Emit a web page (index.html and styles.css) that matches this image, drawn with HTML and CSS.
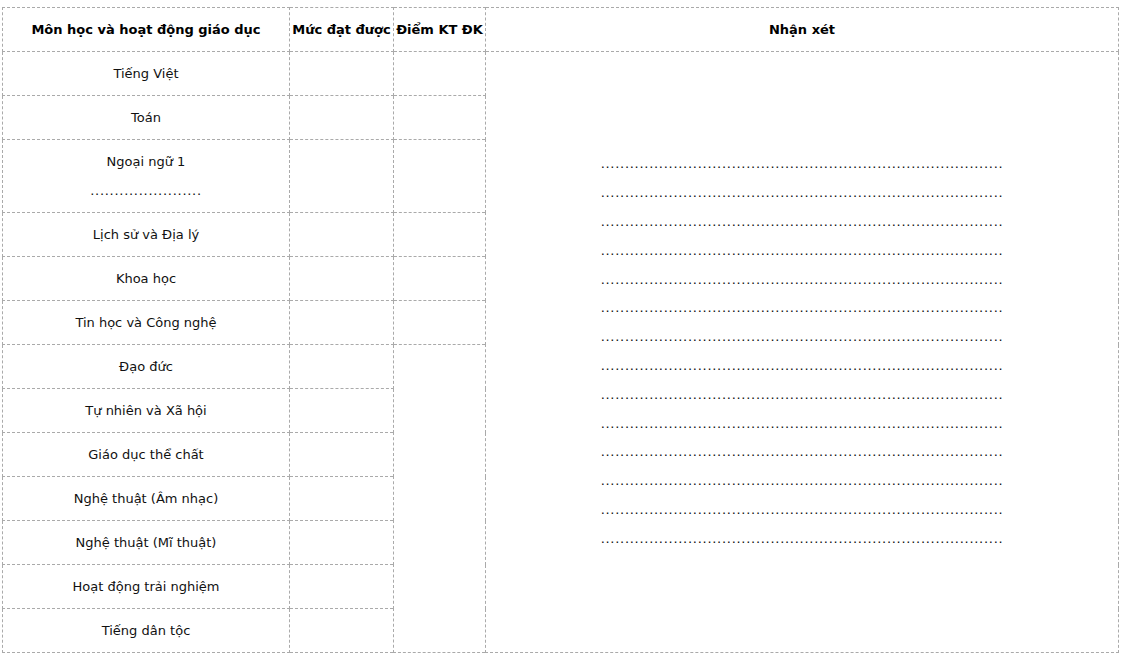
FILE: index.html
```html
<!DOCTYPE html>
<html lang="vi">
<head>
<meta charset="utf-8">
<title>Bảng nhận xét</title>
<link rel="stylesheet" href="styles.css">
</head>
<body>
<table class="report">
  <colgroup>
    <col class="c1">
    <col class="c2">
    <col class="c3">
    <col class="c4">
  </colgroup>
  <thead>
    <tr>
      <th>Môn học và hoạt động giáo dục</th>
      <th>Mức đạt được</th>
      <th>Điểm KT ĐK</th>
      <th>Nhận xét</th>
    </tr>
  </thead>
  <tbody>
    <tr>
      <td>Tiếng Việt</td>
      <td></td>
      <td></td>
      <td rowspan="13" class="comment">
        <p class="dots">...................................................................................</p>
        <p class="dots">...................................................................................</p>
        <p class="dots">...................................................................................</p>
        <p class="dots">...................................................................................</p>
        <p class="dots">...................................................................................</p>
        <p class="dots">...................................................................................</p>
        <p class="dots">...................................................................................</p>
        <p class="dots">...................................................................................</p>
        <p class="dots">...................................................................................</p>
        <p class="dots">...................................................................................</p>
        <p class="dots">...................................................................................</p>
        <p class="dots">...................................................................................</p>
        <p class="dots">...................................................................................</p>
        <p class="dots">...................................................................................</p>
      </td>
    </tr>
    <tr><td>Toán</td><td></td><td></td></tr>
    <tr><td><p class="line">Ngoại ngữ 1</p><p class="line dots">.......................</p></td><td></td><td></td></tr>
    <tr><td>Lịch sử và Địa lý</td><td></td><td></td></tr>
    <tr><td>Khoa học</td><td></td><td></td></tr>
    <tr><td>Tin học và Công nghệ</td><td></td><td></td></tr>
    <tr><td>Đạo đức</td><td></td><td rowspan="7"></td></tr>
    <tr><td>Tự nhiên và Xã hội</td><td></td></tr>
    <tr><td>Giáo dục thể chất</td><td></td></tr>
    <tr><td>Nghệ thuật (Âm nhạc)</td><td></td></tr>
    <tr><td>Nghệ thuật (Mĩ thuật)</td><td></td></tr>
    <tr><td>Hoạt động trải nghiệm</td><td></td></tr>
    <tr><td>Tiếng dân tộc</td><td></td></tr>
  </tbody>
</table>
</body>
</html>
```

FILE: styles.css
```css
html, body {
  background: #fff;
}
body {
  margin: 7px 0 0 2px;
  font-family: "DejaVu Sans", Verdana, sans-serif;
  font-size: 13px;
  color: #111;
}
.report {
  border-collapse: collapse;
  table-layout: fixed;
  width: 1116px;
  border: 1px dashed #aaa;
}
.c1 { width: 287px; }
.c2 { width: 104px; }
.c3 { width: 92px; }
.c4 { width: 633px; }
.report th,
.report td {
  border: 1px dashed #aaa;
  padding: 7px 0;
  line-height: 29px;
  text-align: center;
  vertical-align: middle;
  white-space: nowrap;
  overflow: hidden;
}
.report th {
  font-weight: bold;
  color: #000;
}
.report p {
  margin: 0;
}
.dots {
  letter-spacing: 0.72px;
}
.comment .dots {
  line-height: 28.8px;
}
```
